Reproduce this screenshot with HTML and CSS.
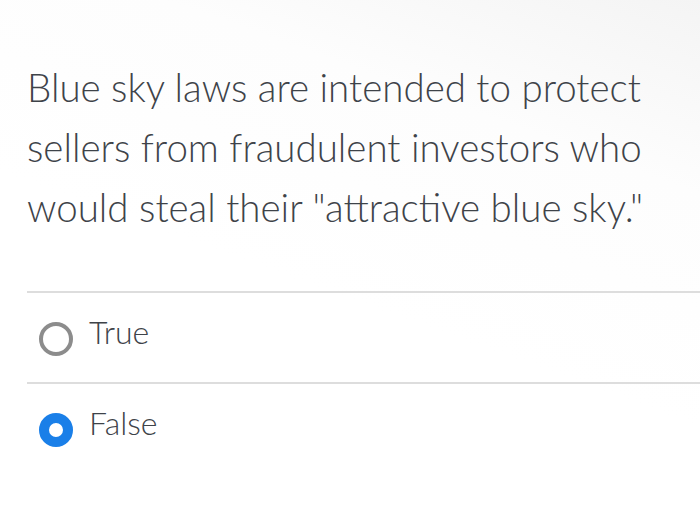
FILE: index.html
```html
<!DOCTYPE html>
<html lang="en">
<head>
<meta charset="utf-8">
<title>Question</title>
<link rel="stylesheet" href="styles.css">
</head>
<body>
<main class="question">
  <p class="prompt">Blue sky laws are intended to protect sellers from fraudulent investors who would steal their "attractive blue sky."</p>
  <ul class="answers">
    <li class="answer">
      <span class="radio"></span>
      <span class="label">True</span>
    </li>
    <li class="answer">
      <span class="radio radio-checked"></span>
      <span class="label">False</span>
    </li>
  </ul>
</main>
</body>
</html>
```
FILE: styles.css
```css
html, body {
  margin: 0;
  padding: 0;
  background: #ffffff;
}

body {
  width: 700px;
  height: 522px;
  overflow: hidden;
  font-family: Lato, "Open Sans", sans-serif;
  color: #3e4349;
  background: linear-gradient(200deg, #f4f4f4 0%, #fdfdfd 25%, #ffffff 55%);
}

.question {
  padding: 57px 0 0 27px;
}

.prompt {
  margin: 0;
  font-size: 38.5px;
  font-weight: 300;
  line-height: 60px;
}

.answers {
  list-style: none;
  margin: 54px 0 0 0;
  padding: 0;
}

.answer {
  display: flex;
  align-items: center;
  height: 89px;
  border-top: 2px solid #dddddd;
  padding-left: 12px;
}

.radio {
  box-sizing: border-box;
  flex: none;
  width: 34px;
  height: 34px;
  border-radius: 50%;
  border: 4px solid #8c8c8c;
  margin-top: 2px;
  margin-right: 16px;
  background: #ffffff;
}

.radio-checked {
  border: 10px solid #1a7fe8;
}

.label {
  font-size: 32px;
  font-weight: 300;
  line-height: 38px;
  padding-bottom: 12px;
}
```
